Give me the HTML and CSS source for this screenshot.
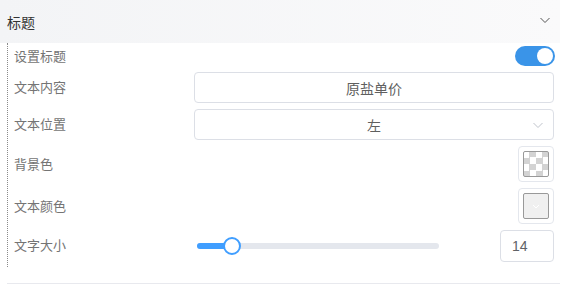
FILE: index.html
```html
<!DOCTYPE html>
<html lang="zh-CN">
<head>
  <meta charset="UTF-8">
  <title>标题设置</title>
  <link rel="stylesheet" href="styles.css">
</head>
<body>
  <div class="panel">
    <div class="panel-header">
      <span class="panel-title">标题</span>
      <svg class="arrow" width="12" height="12" viewBox="0 0 12 12"><path d="M1.5 4 L6 8.5 L10.5 4" fill="none" stroke="#555" stroke-width="1"/></svg>
    </div>
    <div class="panel-body">
      <div class="row row-sm">
        <span class="label">设置标题</span>
        <div class="control end">
          <span class="switch"><span class="knob"></span></span>
        </div>
      </div>
      <div class="row row-md">
        <span class="label">文本内容</span>
        <div class="control">
          <div class="input">原盐单价</div>
        </div>
      </div>
      <div class="row row-md">
        <span class="label">文本位置</span>
        <div class="control">
          <div class="input select">
            左
            <svg class="select-arrow" width="12" height="12" viewBox="0 0 12 12"><path d="M1.5 4 L6 8.5 L10.5 4" fill="none" stroke="#c0c4cc" stroke-width="1"/></svg>
          </div>
        </div>
      </div>
      <div class="row row-lg">
        <span class="label">背景色</span>
        <div class="control end">
          <span class="picker"><span class="swatch checker"></span></span>
        </div>
      </div>
      <div class="row row-lg">
        <span class="label">文本颜色</span>
        <div class="control end">
          <span class="picker">
            <span class="swatch filled">
              <svg width="10" height="10" viewBox="0 0 10 10"><path d="M2 4 L5 7 L8 4" fill="none" stroke="#fff" stroke-width="1"/></svg>
            </span>
          </span>
        </div>
      </div>
      <div class="row row-md">
        <span class="label">文字大小</span>
        <div class="control slider-wrap">
          <div class="slider">
            <div class="slider-fill" style="width: 34px"></div>
            <span class="slider-handle" style="left: 34px"></span>
          </div>
          <div class="number">14</div>
        </div>
      </div>
    </div>
    <div class="divider"></div>
  </div>
</body>
</html>
```

FILE: styles.css
```css
body {
  margin: 0;
  font-family: "Noto Sans CJK SC", "Noto Sans", sans-serif;
  background: #fff;
  color: #606266;
}
.panel {
  width: 560px;
}
.panel-header {
  height: 43px;
  display: flex;
  align-items: center;
  justify-content: space-between;
  padding: 0 9px 0 7px;
  background: linear-gradient(to right, #f3f4f6, #fafafb);
  box-sizing: border-box;
}
.panel-title {
  font-size: 14px;
  color: #333;
}
.arrow {
  margin-top: -4px;
}
.panel-body {
  margin-left: 7px;
  border-left: 1px dotted #8a8a8a;
  padding: 3px 6px 6px 6px;
  display: flex;
  flex-direction: column;
  gap: 6px;
}
.row {
  display: flex;
  align-items: center;
}
.row-sm { height: 20px; }
.row-md { height: 31px; }
.row-lg { height: 36px; }
.label {
  width: 180px;
  font-size: 13px;
  color: #747474;
  margin-top: -2px;
}
.control {
  flex: 1;
  display: flex;
  align-items: center;
  height: 100%;
}
.control.end {
  justify-content: flex-end;
}
.switch {
  width: 40px;
  height: 20px;
  border-radius: 10px;
  background: #3a94e8;
  position: relative;
  margin-right: -1px;
}
.knob {
  position: absolute;
  right: 2px;
  top: 2px;
  width: 16px;
  height: 16px;
  border-radius: 50%;
  background: #fff;
}
.input {
  position: relative;
  width: 100%;
  height: 100%;
  box-sizing: border-box;
  border: 1px solid #dcdfe6;
  border-radius: 4px;
  display: flex;
  align-items: center;
  justify-content: center;
  font-size: 14px;
  color: #5f5f5f;
}
.select-arrow {
  position: absolute;
  right: 9px;
  top: 9px;
}
.picker {
  width: 36px;
  height: 36px;
  box-sizing: border-box;
  border: 1px solid #e4e7ed;
  border-radius: 4px;
  display: flex;
  align-items: center;
  justify-content: center;
}
.swatch {
  width: 26px;
  height: 26px;
  box-sizing: border-box;
  border: 1px solid #999;
  border-radius: 2px;
  display: flex;
  align-items: center;
  justify-content: center;
}
.checker {
  background: conic-gradient(#d3d3d3 25%, #fff 0 50%, #d3d3d3 0 75%, #fff 0) -1px -1px / 13px 13px;
}
.filled {
  background: #f0f0f0;
}
.slider-wrap {
  justify-content: space-between;
}
.slider {
  position: relative;
  width: 242px;
  height: 6px;
  margin-left: 3px;
  border-radius: 3px;
  background: #e4e7ed;
}
.slider-fill {
  height: 100%;
  border-radius: 3px;
  background: #409eff;
}
.slider-handle {
  position: absolute;
  top: -6px;
  width: 14px;
  height: 14px;
  margin-left: -8px;
  border: 2px solid #409eff;
  border-radius: 50%;
  background: #fff;
}
.number {
  width: 54px;
  height: 32px;
  box-sizing: border-box;
  border: 1px solid #dcdfe6;
  border-radius: 4px;
  padding-left: 11px;
  display: flex;
  align-items: center;
  font-size: 14px;
  font-family: "Liberation Sans", Arial, sans-serif;
  color: #606266;
}
.divider {
  margin: 16px 0 0 7px;
  height: 1px;
  background: #e8e9ee;
}
```
